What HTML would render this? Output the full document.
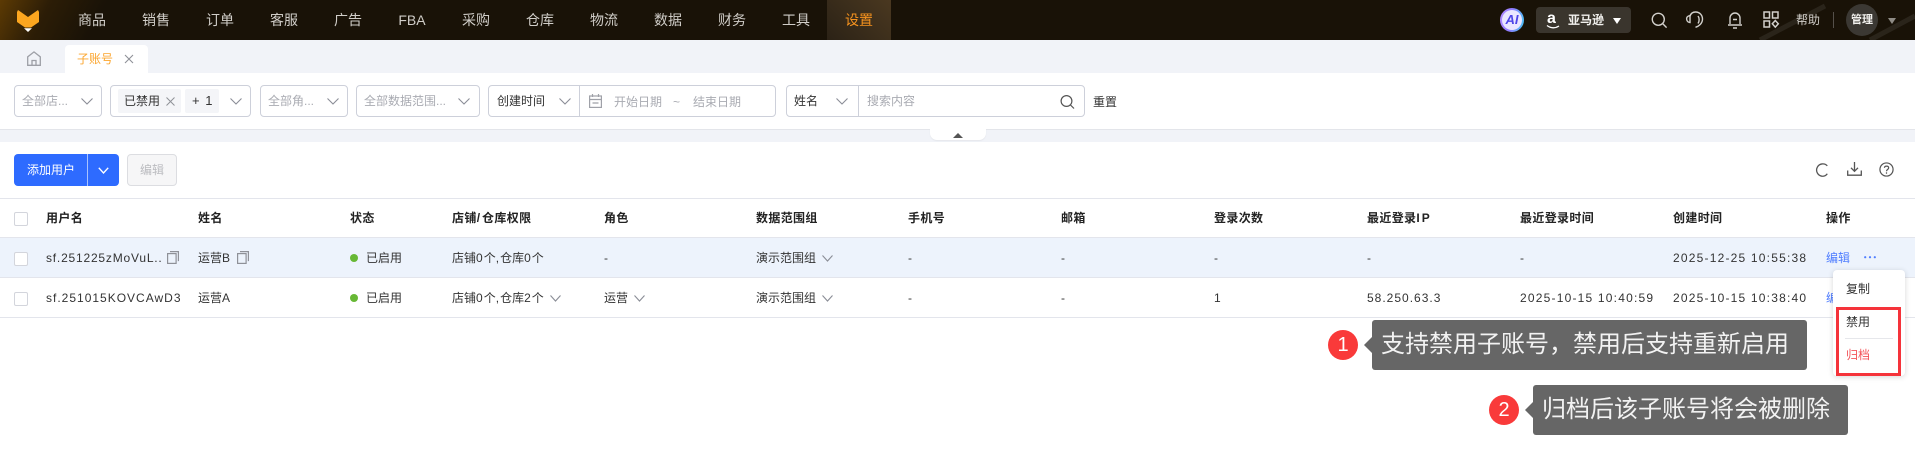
<!DOCTYPE html>
<html lang="zh"><head><meta charset="utf-8"><title>子账号</title>
<style>
*{box-sizing:border-box}
html,body{margin:0;padding:0}
body{width:1915px;height:458px;overflow:hidden;background:#fff;position:relative;font-family:"Liberation Sans","Noto Sans CJK SC",sans-serif;font-size:12px;color:#333}
.a{position:absolute;white-space:nowrap}
.t{position:absolute;white-space:nowrap;line-height:16px;height:16px}
svg{position:absolute;overflow:visible}
.hd{left:0;top:0;width:1915px;height:40px;background:linear-gradient(118deg,#5c3a04 0,#2c1d06 45px,#191207 95px,#191207 100%)}
.nav{position:absolute;top:10px;line-height:20px;width:64px;text-align:center;font-size:14px;color:#d0cdc8}
.box{position:absolute;top:85px;height:32px;border:1px solid #cdd0da;border-radius:4px;background:#fff}
.ph{color:#a9abb2}
.th{font-weight:bold;color:#222;letter-spacing:.35px}
.ln{letter-spacing:1px;color:#333}
.lt{letter-spacing:1.2px;color:#333}
.s{letter-spacing:1px}
.ss{letter-spacing:2px}
.cb{position:absolute;left:14px;width:14px;height:14px;border:1px solid #d3d5dc;border-radius:2px;background:#fff}
.hr{position:absolute;left:0;width:1915px;height:1px;background:#e3e5ec}
.dot{position:absolute;left:350px;width:8px;height:8px;border-radius:50%;background:#67b835}
.ch{fill:none;stroke:#8a8d96;stroke-width:1.1}
.call{position:absolute;background:#666;border-radius:3px;color:#f2f2f2;font-size:24px;line-height:50px;height:50px;white-space:nowrap}
.num{position:absolute;width:30px;height:30px;border-radius:50%;background:#f93a3a;color:#fff;font-size:20px;line-height:30px;text-align:center}
</style></head><body>

<div class="a hd"></div>
<svg style="left:17px;top:10px" width="22" height="22" viewBox="0 0 22 22"><path d="M0 2L1 0l10 7L21 0l1 2v10l-8 5.500H8L0 12z" fill="#fca61f"/><path d="M7 18.300h8L11 22z" fill="#fff"/></svg>
<div class="nav" style="left:60px">商品</div><div class="nav" style="left:124px">销售</div><div class="nav" style="left:188px">订单</div><div class="nav" style="left:252px">客服</div><div class="nav" style="left:316px">广告</div><div class="nav" style="left:380px">FBA</div><div class="nav" style="left:444px">采购</div><div class="nav" style="left:508px">仓库</div><div class="nav" style="left:572px">物流</div><div class="nav" style="left:636px">数据</div><div class="nav" style="left:700px">财务</div><div class="nav" style="left:764px">工具</div>
<div class="a" style="left:827px;top:0;width:64px;height:40px;background:linear-gradient(45deg,#2b2216,#4a3820)"></div>
<div class="nav" style="left:827px;color:#f7931e">设置</div>

<svg style="left:1700px;top:0" width="215" height="40"><path d="M60 40L125 6M170 40L215 16" stroke="#2a241a" stroke-width="5" fill="none"/></svg>
<div class="a" style="left:1500px;top:8px;width:24px;height:24px;border-radius:50%;background:linear-gradient(100deg,#b48cff,#8f7bff 45%,#45c8f5)"></div>
<div class="a" style="left:1502px;top:10px;width:20px;height:20px;border-radius:50%;background:#e9e6ff;text-align:center;line-height:20px;font-size:13px;font-weight:bold;font-style:italic;color:#4d45e8">AI</div>
<div class="a" style="left:1536px;top:7px;width:95px;height:26px;border-radius:4px;background:#3a352d"></div>
<div class="t" style="left:1547px;top:9px;width:12px;font-size:16px;line-height:20px;height:20px;font-weight:bold;color:#fff">a</div>
<svg style="left:1546px;top:25px" width="14" height="5"><path d="M1 .5c4 3 8 3 12 .5" stroke="#fff" stroke-width="1.300" fill="none"/></svg>
<div class="t" style="left:1568px;top:12px;color:#f1f0ed;font-weight:bold">亚马逊</div>
<svg style="left:1612px;top:17px" width="10" height="8"><path d="M1 1h8L5 7z" fill="#fff"/></svg>
<svg style="left:1651px;top:12px" width="17" height="17" viewBox="0 0 17 17" fill="none" stroke="#d2d0cc" stroke-width="1.400"><circle cx="7.300" cy="7.300" r="6"/><path d="M11.800 11.800l3.800 3.800"/></svg>
<svg style="left:1686px;top:11px" width="18" height="18" viewBox="0 0 18 18" fill="none" stroke="#d2d0cc" stroke-width="1.400"><path d="M4 5C5 2 7 1 9.500 1 14 1 16.500 4.500 16.500 8c0 4-3 7-7 8.300"/><path d="M4 4.500C1.500 5 .2 6.500.7 8.500 1 10.500 2.500 11.500 4 11.500z"/><path d="M12 5c1.500 2 1.500 5.500 0 7.500"/></svg>
<svg style="left:1727px;top:11px" width="16" height="18" viewBox="0 0 16 18" fill="none" stroke="#d2d0cc" stroke-width="1.400"><path d="M3 13V7a5 5 0 0110 0v6M1 14h14M6 17h4M6 8.500h4"/></svg>
<svg style="left:1763px;top:11px" width="16" height="17" viewBox="0 0 16 17" fill="none" stroke="#d2d0cc" stroke-width="1.500"><rect x="1" y="1" width="5.500" height="6"/><rect x="9.500" y="1" width="5.500" height="6"/><rect x="1" y="10" width="5.500" height="6"/><path d="M12.300 9.500l3 3.300-3 3.300-3-3.300z"/></svg>
<div class="t" style="left:1796px;top:12px;color:#d0cdc8">帮助</div>
<div class="a" style="left:1833px;top:12px;width:1px;height:16px;background:#55504a"></div>
<div class="a" style="left:1846px;top:4px;width:32px;height:32px;border-radius:50%;background:#3b3833;text-align:center;line-height:32px;font-size:11px;font-weight:bold;color:#f1f0ed">管理</div>
<svg style="left:1887px;top:17px" width="10" height="8"><path d="M1 1h8L5 7z" fill="#8f8c86"/></svg>

<div class="a" style="left:0;top:40px;width:1915px;height:33px;background:#f1f3f8"></div>
<svg style="left:27px;top:51px" width="14" height="15" viewBox="0 0 14 15" fill="none" stroke="#9d9fa6" stroke-width="1.300"><path d="M.7 14.300V5.800L7 .9l6.300 4.900v8.500z"/><path d="M5 14.300V9.500h4v4.800"/></svg>
<div class="a" style="left:65px;top:45px;width:83px;height:28px;background:#fff;border-radius:4px 4px 0 0"></div>
<div class="t" style="left:77px;top:51px;color:#fba62f">子账号</div>
<svg style="left:124px;top:54px" width="10" height="10"><path d="M1 1l8 8M9 1L1 9" stroke="#8f9198" stroke-width="1.100"/></svg>

<div class="a" style="left:0;top:129px;width:1915px;height:13px;background:#f1f3f8;border-top:1px solid #e3e5ea"></div>
<div class="a" style="left:930px;top:129px;width:56px;height:11px;background:#fff;border-radius:0 0 7px 7px;box-shadow:0 1px 1px #e5e7ec"></div>
<svg style="left:953px;top:132px" width="10" height="6"><path d="M0 6L5 1l5 5z" fill="#555"/></svg>

<div class="box" style="left:14px;width:88px"></div>
<div class="t ph" style="left:22px;top:93px">全部店...</div>
<svg style="left:81px;top:98px" width="12" height="7"><path class="ch" d="M.5.500L6 6l5.500-5.500"/></svg>

<div class="box" style="left:110px;width:141px"></div>
<div class="a" style="left:118px;top:89px;width:63px;height:24px;background:#f4f5f8;border-radius:2px"></div>
<div class="t" style="left:124px;top:93px;color:#333">已禁用</div>
<svg style="left:166px;top:97px" width="9" height="9"><path d="M.5.500l8 8M8.500.500l-8 8" stroke="#8f9198" stroke-width="1"/></svg>
<div class="a" style="left:185px;top:89px;width:34px;height:24px;background:#f4f5f8;border-radius:2px"></div>
<div class="t" style="left:192px;top:93px;color:#333;letter-spacing:1px;font-size:13px">+ 1</div>
<svg style="left:230px;top:98px" width="12" height="7"><path class="ch" d="M.5.500L6 6l5.500-5.500"/></svg>

<div class="box" style="left:260px;width:88px"></div>
<div class="t ph" style="left:268px;top:93px">全部角...</div>
<svg style="left:327px;top:98px" width="12" height="7"><path class="ch" d="M.5.500L6 6l5.500-5.500"/></svg>

<div class="box" style="left:356px;width:124px"></div>
<div class="t ph" style="left:364px;top:93px">全部数据范围...</div>
<svg style="left:458px;top:98px" width="12" height="7"><path class="ch" d="M.5.500L6 6l5.500-5.500"/></svg>

<div class="box" style="left:488px;width:288px"></div>
<div class="t" style="left:497px;top:93px;color:#333">创建时间</div>
<svg style="left:559px;top:98px" width="12" height="7"><path class="ch" d="M.5.500L6 6l5.500-5.500"/></svg>
<div class="a" style="left:579px;top:85px;width:1px;height:32px;background:#cdd0da"></div>
<svg style="left:589px;top:94px" width="13" height="14" viewBox="0 0 13 14" fill="none" stroke="#9fa1a8" stroke-width="1.200"><rect x=".6" y="2" width="11.800" height="11.400"/><path d="M3.500 0v3M9.500 0v3M.6 5.500h11.800M3.500 9h6"/></svg>
<div class="t ph" style="left:614px;top:94px">开始日期</div>
<div class="t ph" style="left:673px;top:94px">~</div>
<div class="t ph" style="left:693px;top:94px">结束日期</div>

<div class="box" style="left:786px;width:299px"></div>
<div class="t" style="left:794px;top:93px;color:#333">姓名</div>
<svg style="left:836px;top:98px" width="12" height="7"><path class="ch" d="M.5.500L6 6l5.500-5.500"/></svg>
<div class="a" style="left:858px;top:85px;width:1px;height:32px;background:#cdd0da"></div>
<div class="t ph" style="left:867px;top:93px">搜索内容</div>
<svg style="left:1060px;top:95px" width="15" height="14" viewBox="0 0 15 14" fill="none" stroke="#555" stroke-width="1.200"><circle cx="6.500" cy="6" r="5.400"/><path d="M10.500 10l3.500 3.500"/></svg>
<div class="t" style="left:1093px;top:94px;color:#333">重置</div>

<div class="a" style="left:14px;top:154px;width:105px;height:32px;background:#2e6bff;border-radius:4px"></div>
<div class="a" style="left:87px;top:154px;width:1px;height:32px;background:#a9c3ff"></div>
<div class="t" style="left:27px;top:162px;color:#fff">添加用户</div>
<svg style="left:98px;top:167px" width="11" height="7"><path d="M.8.800L5.500 6l4.700-5.200" fill="none" stroke="#fff" stroke-width="1.400"/></svg>
<div class="a" style="left:127px;top:154px;width:50px;height:32px;background:#f6f6f7;border:1px solid #dcdde1;border-radius:4px"></div>
<div class="t" style="left:140px;top:162px;color:#bbbcc0">编辑</div>

<svg style="left:1815px;top:163px" width="13" height="14" viewBox="0 0 13 14" fill="none" stroke="#555" stroke-width="1.300"><path d="M12.300 2.800A6.200 6.200 0 106.800 13.200a6.200 6.200 0 005.500-2.500"/></svg>
<svg style="left:1847px;top:162px" width="15" height="14" viewBox="0 0 15 14" fill="none" stroke="#555" stroke-width="1.300"><path d="M7.500 0v9M4 5.800L7.500 9.300 11 5.800M.7 8.500v4.700h13.600V8.500"/></svg>
<svg style="left:1879px;top:162px" width="15" height="15" viewBox="0 0 16 16" fill="none" stroke="#555" stroke-width="1.300"><circle cx="8" cy="8" r="7"/><path d="M5.800 6.200C6 3.800 10.300 3.800 10.300 6.300c0 1.800-2.300 1.700-2.300 3.500"/><path d="M8 11v1.500"/></svg>

<div class="hr" style="top:198px"></div>
<div class="hr" style="top:237px"></div>
<div class="a" style="left:0;top:238px;width:1915px;height:39px;background:#edf3fc"></div>
<div class="hr" style="top:277px"></div>
<div class="hr" style="top:317px"></div>
<div class="cb" style="top:212px"></div><div class="cb" style="top:252px"></div><div class="cb" style="top:292px"></div>

<div class="t th" style="left:46px;top:210px">用户名</div><div class="t th" style="left:198px;top:210px">姓名</div><div class="t th" style="left:350px;top:210px">状态</div><div class="t th" style="left:452px;top:210px">店铺<span class="ss">/</span>仓库权限</div><div class="t th" style="left:604px;top:210px">角色</div><div class="t th" style="left:756px;top:210px">数据范围组</div><div class="t th" style="left:908px;top:210px">手机号</div><div class="t th" style="left:1061px;top:210px">邮箱</div><div class="t th" style="left:1214px;top:210px">登录次数</div><div class="t th" style="left:1367px;top:210px">最近登录<span class="ss">IP</span></div><div class="t th" style="left:1520px;top:210px">最近登录时间</div><div class="t th" style="left:1673px;top:210px">创建时间</div><div class="t th" style="left:1826px;top:210px">操作</div>

<div class="t" style="left:46px;top:250px;letter-spacing:.8px">sf.251225zMoVuL..</div>
<svg style="left:167px;top:251px" width="12" height="13" viewBox="0 0 12 13" fill="none" stroke="#8f9198" stroke-width="1.200"><rect x=".6" y="2.600" width="8.500" height="9.800"/><path d="M3 .6h8.400v9.500"/></svg>
<div class="t" style="left:198px;top:250px">运营<span class="s">B</span></div>
<svg style="left:237px;top:251px" width="12" height="13" viewBox="0 0 12 13" fill="none" stroke="#8f9198" stroke-width="1.200"><rect x=".6" y="2.600" width="8.500" height="9.800"/><path d="M3 .6h8.400v9.500"/></svg>
<div class="dot" style="top:254px"></div><div class="t" style="left:366px;top:250px">已启用</div>
<div class="t" style="left:452px;top:250px">店铺<span class="s">0</span>个<span class="s">,</span>仓库<span class="s">0</span>个</div>
<div class="t" style="left:604px;top:250px">-</div>
<div class="t" style="left:756px;top:250px">演示范围组</div>
<svg style="left:822px;top:255px" width="11" height="7"><path class="ch" d="M.5.500L5.500 6l5-5.500"/></svg>
<div class="t" style="left:908px;top:250px">-</div><div class="t" style="left:1061px;top:250px">-</div><div class="t" style="left:1214px;top:250px">-</div><div class="t" style="left:1367px;top:250px">-</div><div class="t" style="left:1520px;top:250px">-</div>
<div class="t lt" style="left:1673px;top:250px">2025-12-25 10:55:38</div>
<div class="t" style="left:1826px;top:250px;color:#4f7dff">编辑</div>
<svg style="left:1864px;top:256px" width="12" height="3"><circle cx="1.200" cy="1.200" r="1.100" fill="#4f7dff"/><circle cx="6" cy="1.200" r="1.100" fill="#4f7dff"/><circle cx="10.800" cy="1.200" r="1.100" fill="#4f7dff"/></svg>

<div class="t ln" style="left:46px;top:290px">sf.251015KOVCAwD3</div>
<div class="t" style="left:198px;top:290px">运营<span class="s">A</span></div>
<div class="dot" style="top:294px"></div><div class="t" style="left:366px;top:290px">已启用</div>
<div class="t" style="left:452px;top:290px">店铺<span class="s">0</span>个<span class="s">,</span>仓库<span class="s">2</span>个</div>
<svg style="left:550px;top:295px" width="11" height="7"><path class="ch" d="M.5.500L5.500 6l5-5.500"/></svg>
<div class="t" style="left:604px;top:290px">运营</div>
<svg style="left:634px;top:295px" width="11" height="7"><path class="ch" d="M.5.500L5.500 6l5-5.500"/></svg>
<div class="t" style="left:756px;top:290px">演示范围组</div>
<svg style="left:822px;top:295px" width="11" height="7"><path class="ch" d="M.5.500L5.500 6l5-5.500"/></svg>
<div class="t" style="left:908px;top:290px">-</div><div class="t" style="left:1061px;top:290px">-</div><div class="t" style="left:1214px;top:290px">1</div>
<div class="t ln" style="left:1367px;top:290px">58.250.63.3</div>
<div class="t lt" style="left:1520px;top:290px">2025-10-15 10:40:59</div>
<div class="t lt" style="left:1673px;top:290px">2025-10-15 10:38:40</div>
<div class="t" style="left:1826px;top:290px;color:#4f7dff">编辑</div>

<div class="a" style="left:1833px;top:270px;width:72px;height:106px;background:#fff;border-radius:4px;box-shadow:0 1px 6px rgba(0,0,0,.16)"></div>
<div class="t" style="left:1846px;top:281px">复制</div>
<div class="t" style="left:1846px;top:314px">禁用</div>
<div class="a" style="left:1845px;top:338px;width:48px;height:1px;background:#e6e7eb"></div>
<div class="t" style="left:1846px;top:347px;color:#f4555a">归档</div>
<div class="a" style="left:1836px;top:307px;width:65px;height:69px;border:3px solid #f5333a"></div>

<div class="num" style="left:1328px;top:330px">1</div>
<svg style="left:1364px;top:337px" width="8" height="16"><path d="M8 0L0 8l8 8z" fill="#666"/></svg>
<div class="call" style="left:1372px;top:320px;width:435px;padding-left:9px">支持禁用子账号，禁用后支持重新启用</div>
<div class="num" style="left:1489px;top:395px">2</div>
<svg style="left:1525px;top:402px" width="8" height="16"><path d="M8 0L0 8l8 8z" fill="#666"/></svg>
<div class="call" style="left:1533px;top:385px;width:315px;padding-left:9px">归档后该子账号将会被删除</div>
</body></html>
